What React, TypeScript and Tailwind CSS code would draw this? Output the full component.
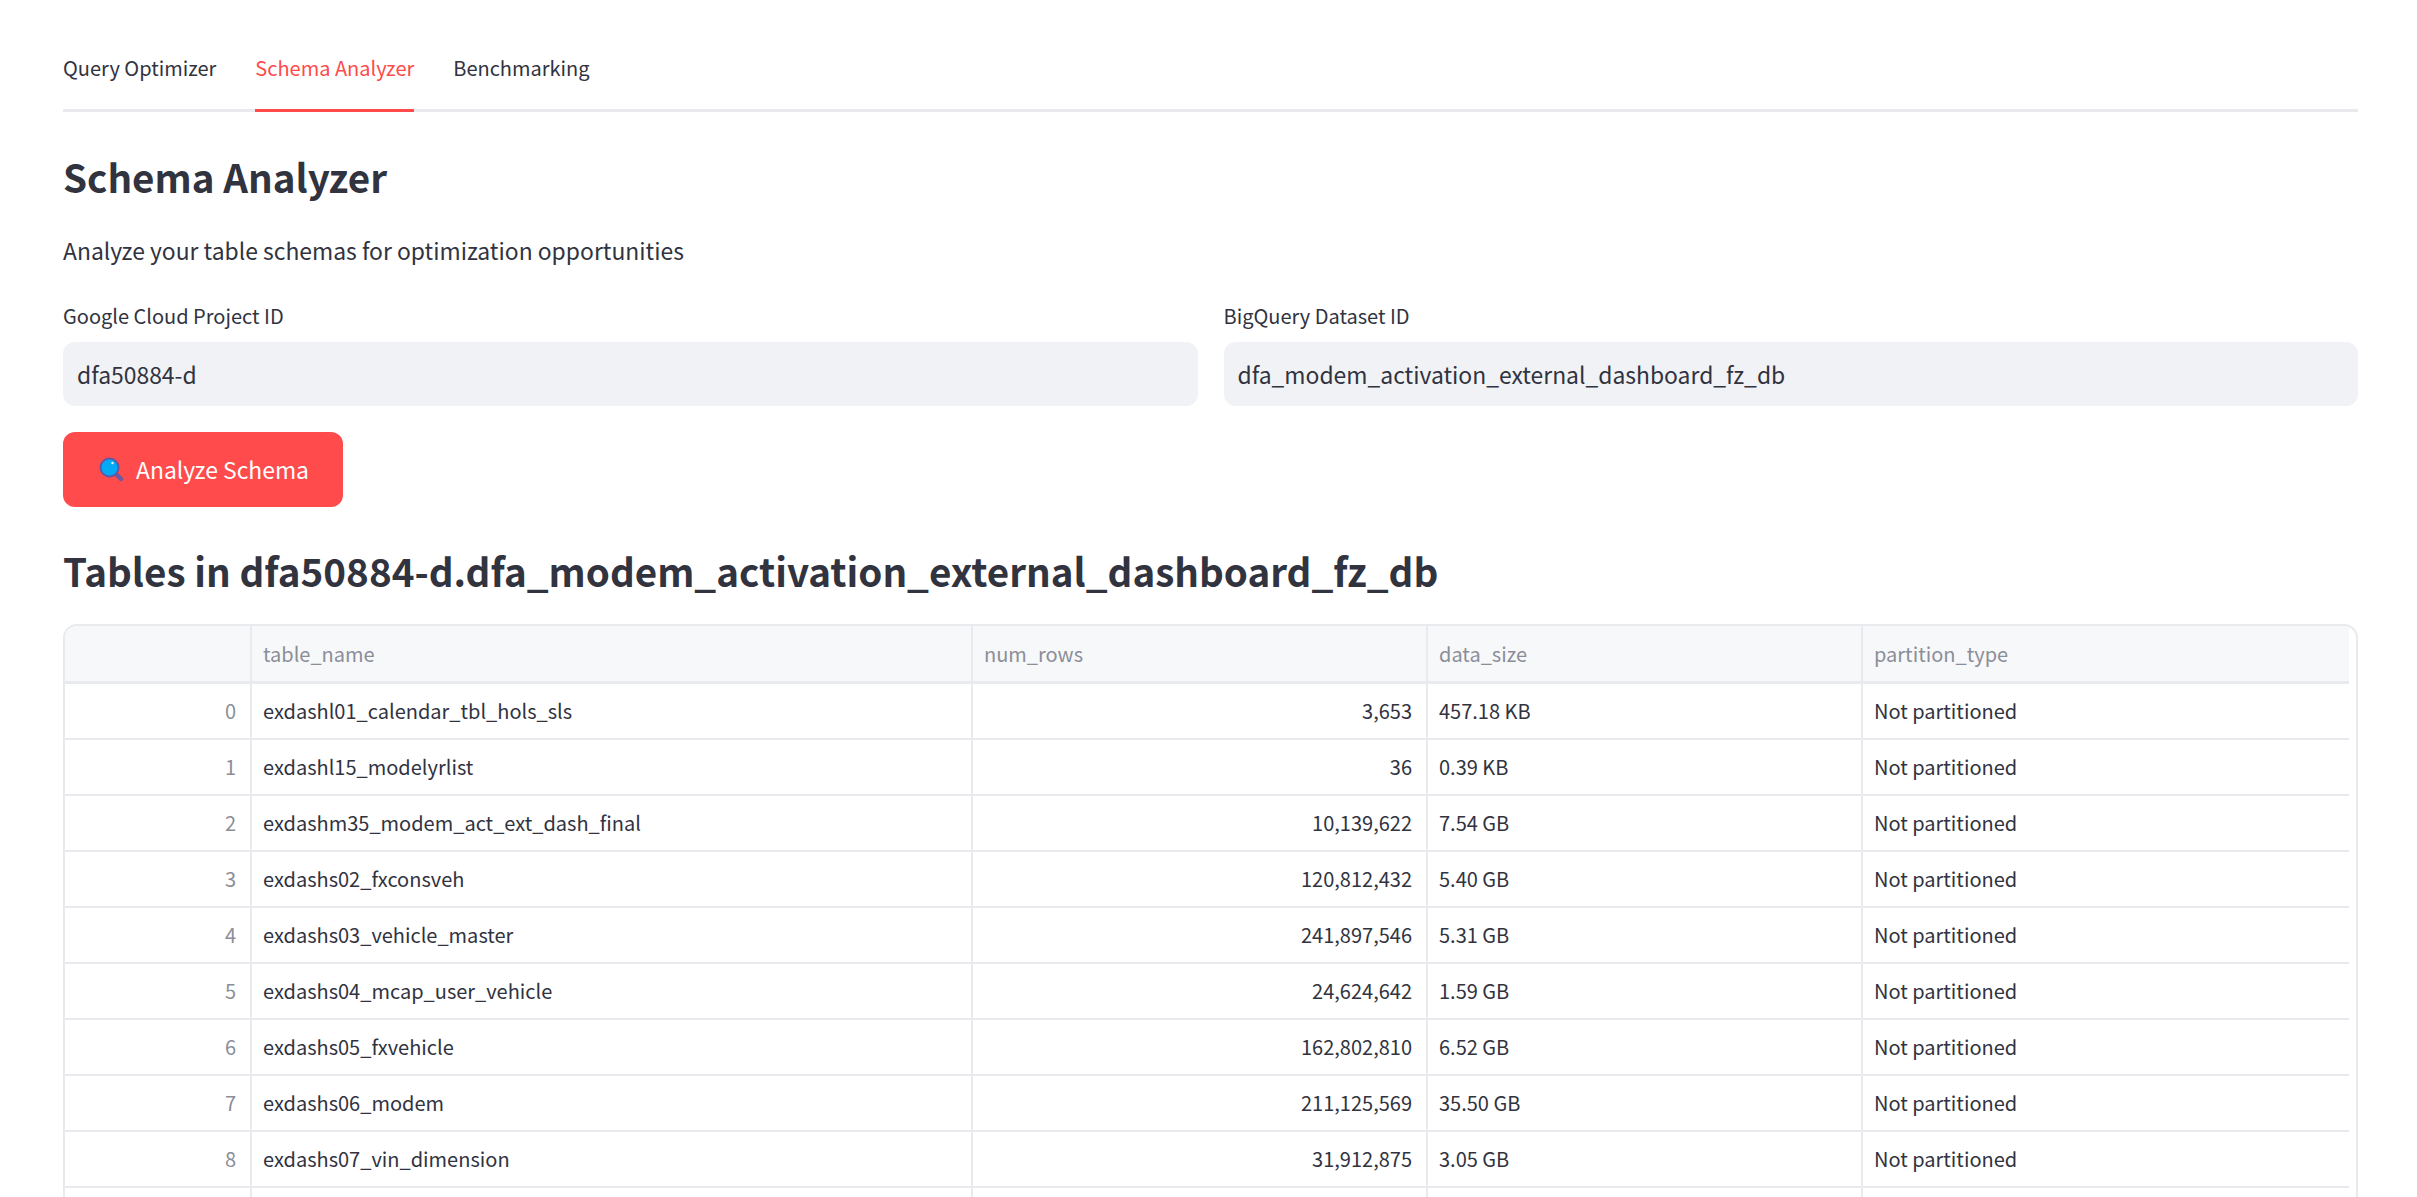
// App.tsx - Schema Analyzer page
const FONT = '[font-family:"Noto_Sans_CJK_SC","Noto_Sans",sans-serif]';

const rows = [
  ['0', 'exdashl01_calendar_tbl_hols_sls', '3,653', '457.18 KB'],
  ['1', 'exdashl15_modelyrlist', '36', '0.39 KB'],
  ['2', 'exdashm35_modem_act_ext_dash_final', '10,139,622', '7.54 GB'],
  ['3', 'exdashs02_fxconsveh', '120,812,432', '5.40 GB'],
  ['4', 'exdashs03_vehicle_master', '241,897,546', '5.31 GB'],
  ['5', 'exdashs04_mcap_user_vehicle', '24,624,642', '1.59 GB'],
  ['6', 'exdashs05_fxvehicle', '162,802,810', '6.52 GB'],
  ['7', 'exdashs06_modem', '211,125,569', '35.50 GB'],
  ['8', 'exdashs07_vin_dimension', '31,912,875', '3.05 GB'],
];

function MagnifierIcon() {
  return (
    <svg width="25" height="25" viewBox="0 0 25 25" className="shrink-0">
      <path d="M17 17l5 5" stroke="#6a5a9e" strokeWidth="4.5" strokeLinecap="round" />
      <circle cx="10.5" cy="10.5" r="9" fill="#03a9f4" stroke="#5c5aa8" strokeWidth="2" />
      <circle cx="13.5" cy="6" r="1.2" fill="#e3f6ff" />
    </svg>
  );
}

function Field({ label, value }: { label: string; value: string }) {
  return (
    <div className="flex-1 min-w-0">
      <div className="h-[41px] text-[20px] leading-[29px] text-[#31333f]">{label}</div>
      <div className="h-[64px] rounded-[12px] bg-[#f0f2f6] px-[14px] flex items-center text-[22.9px] text-[#31333f]">
        {value}
      </div>
    </div>
  );
}

function HeaderRow() {
  return (
    <div className="flex h-[58px] bg-[#f7f8fa] border-b-[3px] border-[#e9eaed] text-[20px] text-[#8b8e98] w-[2284px]">
      <div className="w-[187px] border-r-2 border-[#e9eaed]" />
      <div className="w-[721px] border-r-2 border-[#e9eaed] pl-[11px] flex items-center">table_name</div>
      <div className="w-[455px] border-r-2 border-[#e9eaed] pl-[11px] flex items-center">num_rows</div>
      <div className="w-[435px] border-r-2 border-[#e9eaed] pl-[11px] flex items-center">data_size</div>
      <div className="w-[486px] pl-[11px] flex items-center">partition_type</div>
    </div>
  );
}

function DataRow({ row }: { row: string[] }) {
  return (
    <div className="flex h-[56px] border-b-2 border-[#e9eaed] text-[20px] text-[#31333f] w-[2284px]">
      <div className="w-[187px] border-r-2 border-[#e9eaed] pr-[14px] pb-[1px] flex items-center justify-end text-[#8b8e98]">{row[0]}</div>
      <div className="w-[721px] border-r-2 border-[#e9eaed] pl-[11px] pb-[1px] flex items-center">{row[1]}</div>
      <div className="w-[455px] border-r-2 border-[#e9eaed] pr-[14px] pb-[1px] flex items-center justify-end">{row[2]}</div>
      <div className="w-[435px] border-r-2 border-[#e9eaed] pl-[11px] pb-[1px] flex items-center">{row[3]}</div>
      <div className="w-[486px] pl-[11px] pb-[1px] flex items-center">Not partitioned</div>
    </div>
  );
}

export default function App() {
  return (
    <div className={`h-screen overflow-hidden bg-white text-[#31333f] ${FONT}`}>
      <div className="pl-[63px] pr-[59px]">
        {/* Tabs */}
        <div className="flex gap-[39px] h-[112px] pt-[47px] border-b-[3px] border-[#e9eaed]">
          <div className="h-[65px] text-[20px] leading-[42px]">Query Optimizer</div>
          <div className="h-[65px] text-[20px] leading-[42px] text-[#ff4b4b] border-b-[3px] border-[#ff4b4b]">Schema Analyzer</div>
          <div className="h-[65px] text-[20px] leading-[42px]">Benchmarking</div>
        </div>

        <h1 className="h-[104px] pt-[36px] text-[38.6px] leading-[56px] font-semibold">Schema Analyzer</h1>
        <p className="h-[85px] pt-[16px] text-[22.9px] leading-[36px]">Analyze your table schemas for optimization opportunities</p>

        <div className="flex gap-[26px] h-[131px]">
          <Field label="Google Cloud Project ID" value="dfa50884-d" />
          <Field label="BigQuery Dataset ID" value="dfa_modem_activation_external_dashboard_fz_db" />
        </div>

        <button className="h-[75px] w-[280px] rounded-[12px] bg-[#ff4b4b] text-white text-[22.9px] flex items-center justify-center gap-[12px] pl-[2px] pb-[1px]">
          <MagnifierIcon />
          Analyze Schema
        </button>

        <h2 className="h-[117px] pt-[35px] text-[38.6px] leading-[56px] font-semibold">Tables in dfa50884-d.dfa_modem_activation_external_dashboard_fz_db</h2>

        {/* Table */}
        <div className="rounded-t-[14px] border-2 border-b-0 border-[#e9eaed] overflow-hidden h-[600px]">
          <HeaderRow />
          {rows.map((row) => (
            <DataRow key={row[0]} row={row} />
          ))}
          <div className="flex h-[56px] w-[2284px]">
            <div className="w-[187px] border-r-2 border-[#e9eaed]" />
            <div className="w-[721px] border-r-2 border-[#e9eaed]" />
            <div className="w-[455px] border-r-2 border-[#e9eaed]" />
            <div className="w-[435px] border-r-2 border-[#e9eaed]" />
          </div>
        </div>
      </div>
    </div>
  );
}
